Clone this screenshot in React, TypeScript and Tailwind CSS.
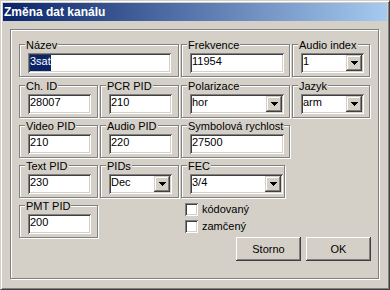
import React from "react";

const sunken =
  "shadow-[inset_1px_1px_0_#808080,inset_-1px_-1px_0_#ffffff,inset_2px_2px_0_#404040,inset_-2px_-2px_0_#d4d0c8]";
const raised =
  "shadow-[inset_-1px_-1px_0_#404040,inset_1px_1px_0_#d4d0c8,inset_-2px_-2px_0_#808080,inset_2px_2px_0_#ffffff]";
const raisedBtn =
  "shadow-[inset_-1px_-1px_0_#404040,inset_1px_1px_0_#ffffff,inset_-2px_-2px_0_#808080,inset_2px_2px_0_#d4d0c8]";

function Group({
  label,
  className = "",
  children,
}: {
  label: string;
  className?: string;
  children?: React.ReactNode;
}) {
  return (
    <div
      className={`relative h-[33px] shrink-0 border border-[#808080] pl-[8px] pt-[8px] shadow-[inset_1px_1px_0_#ffffff,1px_1px_0_#ffffff] ${className}`}
    >
      <span className="absolute left-[5px] top-[-6px] bg-[#d4d0c8] px-[1px] leading-[13px] whitespace-nowrap">
        {label}
      </span>
      {children}
    </div>
  );
}

function Edit({ className = "", children }: { className?: string; children?: React.ReactNode }) {
  return (
    <div className={`h-[20px] bg-white pl-[2px] pt-[2px] leading-[13px] ${sunken} ${className}`}>
      {children}
    </div>
  );
}

function Arrow() {
  return (
    <svg width="7" height="4" viewBox="0 0 7 4" shapeRendering="crispEdges">
      <path d="M0 0h7v1H0zM1 1h5v1H1zM2 2h3v1H2zM3 3h1v1H3z" fill="#000" />
    </svg>
  );
}

function Combo({ className = "", value }: { className?: string; value: string }) {
  return (
    <div className={`flex h-[20px] bg-white p-[2px] ${sunken} ${className}`}>
      <span className="flex-1 leading-[13px]">{value}</span>
      <div className={`flex h-[16px] w-[16px] items-center justify-center bg-[#d4d0c8] ${raised}`}>
        <Arrow />
      </div>
    </div>
  );
}

function Check({ label }: { label: string }) {
  return (
    <div className="flex h-[13px] items-center gap-[4px]">
      <div className={`h-[13px] w-[13px] bg-white ${sunken}`} />
      <span className="leading-[13px]">{label}</span>
    </div>
  );
}

function Btn({ label }: { label: string }) {
  return (
    <div className={`flex h-[24px] w-[65px] items-center justify-center bg-[#d4d0c8] ${raisedBtn}`}>
      {label}
    </div>
  );
}

export default function App() {
  return (
    <div className="flex h-[290px] w-[390px] flex-col border border-t-[#d4d0c8] border-l-[#d4d0c8] border-r-[#404040] border-b-[#404040] bg-[#d4d0c8] p-[1px] font-['Liberation_Sans',Arial,sans-serif] text-[11px] text-black shadow-[inset_1px_1px_0_#ffffff,inset_-1px_-1px_0_#808080]">
      <div className="mx-[1px] mt-[1px] h-[18px] bg-linear-to-r/srgb from-[#0a246a] to-[#a6caf0] pl-[1px] text-[12px] leading-[18px] font-bold text-white">
        Změna dat kanálu
      </div>
      <div className="flex-1 pb-[9px] pl-[8px] pr-[9px] pt-[8px]">
        <div className="flex h-full flex-col gap-[7px] border border-[#808080] px-[8px] pt-[14px] shadow-[inset_1px_1px_0_#ffffff,1px_1px_0_#ffffff]">
          <div className="mb-[1px] flex gap-[2px]">
            <Group label="Název" className="w-[160px]">
              <Edit className="w-[143px]">
                <span className="inline-block bg-[#0a246a] pb-[3px] text-white">3sat</span>
              </Edit>
            </Group>
            <Group label="Frekvence" className="w-[109px]">
              <Edit className="w-[94px]">11954</Edit>
            </Group>
            <Group label="Audio index" className="w-[78px]">
              <Combo className="w-[63px]" value="1" />
            </Group>
          </div>
          <div className="flex gap-[2px]">
            <Group label="Ch. ID" className="w-[79px]">
              <Edit className="w-[63px]">28007</Edit>
            </Group>
            <Group label="PCR PID" className="w-[79px]">
              <Edit className="w-[63px]">210</Edit>
            </Group>
            <Group label="Polarizace" className="w-[109px]">
              <Combo className="w-[94px]" value="hor" />
            </Group>
            <Group label="Jazyk" className="w-[78px]">
              <Combo className="w-[63px]" value="arm" />
            </Group>
          </div>
          <div className="flex gap-[2px]">
            <Group label="Video PID" className="w-[79px]">
              <Edit className="w-[63px]">210</Edit>
            </Group>
            <Group label="Audio PID" className="w-[79px]">
              <Edit className="w-[63px]">220</Edit>
            </Group>
            <Group label="Symbolová rychlost" className="w-[109px]">
              <Edit className="w-[94px]">27500</Edit>
            </Group>
          </div>
          <div className="flex gap-[2px]">
            <Group label="Text PID" className="w-[79px]">
              <Edit className="w-[63px]">230</Edit>
            </Group>
            <Group label="PIDs" className="w-[79px]">
              <Combo className="w-[63px]" value="Dec" />
            </Group>
            <Group label="FEC" className="w-[104px]">
              <Combo className="w-[93px]" value="3/4" />
            </Group>
          </div>
          <div className="flex">
            <Group label="PMT PID" className="w-[79px]">
              <Edit className="w-[63px]">200</Edit>
            </Group>
            <div className="ml-[83px] mt-[-2px] flex flex-1 flex-col pl-[4px]">
              <div className="flex flex-col gap-[4px]">
                <Check label="kódovaný" />
                <Check label="zamčený" />
              </div>
              <div className="mt-[4px] mr-[-1px] flex justify-end gap-[5px]">
                <Btn label="Storno" />
                <Btn label="OK" />
              </div>
            </div>
          </div>
        </div>
      </div>
    </div>
  );
}
